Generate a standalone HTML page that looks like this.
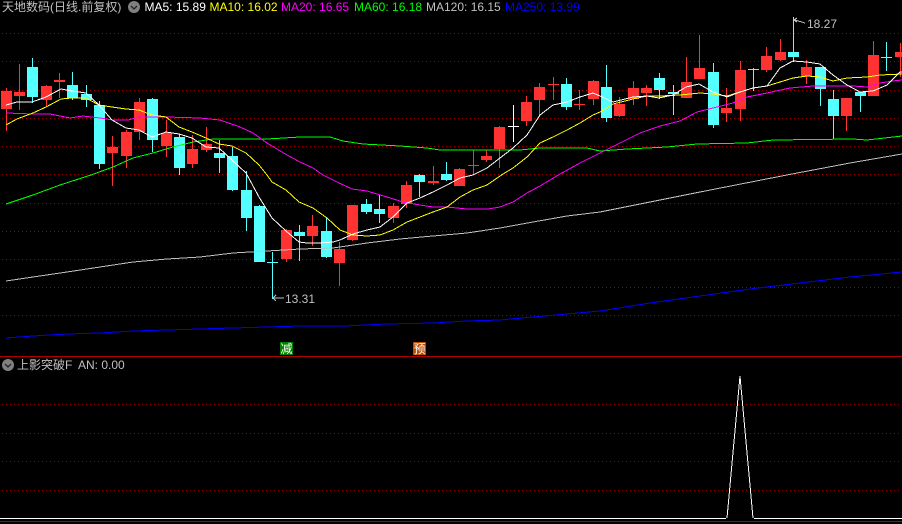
<!DOCTYPE html>
<html><head><meta charset="utf-8"><style>
html,body{margin:0;padding:0;background:#000;width:902px;height:524px;overflow:hidden}
svg{display:block;position:absolute;left:0;top:0}
text{font-family:"Liberation Sans","WenQuanYi Zen Hei","Noto Sans CJK SC",sans-serif;font-size:12px;fill:#c0c0c0}
</style></head><body>
<svg width="902" height="524" viewBox="0 0 902 524" xmlns="http://www.w3.org/2000/svg">
<g shape-rendering="crispEdges">
<g stroke="#a00000" stroke-width="1" stroke-dasharray="1 3" fill="none">
<path d="M2 33.5H902M2 61.5H902M2 90.5H902M2 118.5H902M2 146.5H902M2 174.5H902M2 203.5H902M2 231.5H902M2 259.5H902M2 287.5H902M2 315.5H902"/>
<path d="M2 404.5H902M2 433.5H902M2 461.5H902M2 490.5H902"/>
</g>
<path fill="#ff3232" d="M6 88h1v43h-1zM1 91h11v18h-11zM19 64h1v46h-1zM14 92h11v4h-11zM46 85h1v22h-1zM41 86h11v14h-11zM59 73h1v25h-1zM54 80h11v2h-11zM112 136h1v50h-1zM107 147h11v6h-11zM126 130h1v38h-1zM121 132h11v24h-11zM139 98h1v42h-1zM134 102h11v30h-11zM166 120h1v37h-1zM161 133h11v13h-11zM192 135h1v33h-1zM187 149h11v15h-11zM206 127h1v25h-1zM201 144h11v6h-11zM286 229h1v33h-1zM281 230h11v29h-11zM312 215h1v31h-1zM307 226h11v10h-11zM339 242h1v44h-1zM334 249h11v14h-11zM352 205h1v36h-1zM347 205h11v35h-11zM393 203h1v20h-1zM388 206h11v12h-11zM406 181h1v27h-1zM401 185h11v19h-11zM433 166h1v19h-1zM428 181h11v2h-11zM459 168h1v18h-1zM454 169h11v17h-11zM473 150h1v25h-1zM468 165h11v1h-11zM486 150h1v12h-1zM481 156h11v4h-11zM499 126h1v42h-1zM494 127h11v22h-11zM526 96h1v30h-1zM521 102h11v19h-11zM539 83h1v33h-1zM534 87h11v13h-11zM553 77h1v23h-1zM548 84h11v1h-11zM579 90h1v20h-1zM574 104h11v1h-11zM593 80h1v25h-1zM588 81h11v18h-11zM619 97h1v20h-1zM614 104h11v12h-11zM633 81h1v24h-1zM628 88h11v11h-11zM646 85h1v21h-1zM641 88h11v5h-11zM686 57h1v41h-1zM681 82h11v16h-11zM699 35h1v44h-1zM694 68h11v11h-11zM726 88h1v34h-1zM721 108h11v5h-11zM740 61h1v60h-1zM735 70h11v39h-11zM766 47h1v25h-1zM761 56h11v14h-11zM780 39h1v22h-1zM775 52h11v8h-11zM806 60h1v24h-1zM801 67h11v9h-11zM846 98h1v33h-1zM841 98h11v18h-11zM873 41h1v55h-1zM868 55h11v41h-11zM900 43h1v34h-1zM895 52h7v5h-7z"/>
<path fill="#54ffff" d="M32 58h1v45h-1zM27 67h11v30h-11zM72 72h1v28h-1zM67 85h11v13h-11zM86 85h1v22h-1zM81 94h11v6h-11zM99 101h1v68h-1zM94 105h11v59h-11zM152 98h1v54h-1zM147 99h11v41h-11zM179 134h1v41h-1zM174 137h11v31h-11zM219 140h1v33h-1zM214 153h11v5h-11zM232 147h1v44h-1zM227 156h11v34h-11zM246 171h1v60h-1zM241 190h11v28h-11zM259 205h1v57h-1zM254 206h11v56h-11zM272 252h1v47h-1zM267 262h11v1h-11zM299 225h1v36h-1zM294 232h11v4h-11zM326 218h1v40h-1zM321 231h11v26h-11zM366 199h1v15h-1zM361 204h11v8h-11zM379 195h1v28h-1zM374 209h11v5h-11zM419 174h1v23h-1zM414 175h11v7h-11zM446 162h1v19h-1zM441 174h11v6h-11zM566 78h1v32h-1zM561 84h11v23h-11zM606 65h1v57h-1zM601 87h11v31h-11zM659 73h1v26h-1zM654 78h11v12h-11zM673 85h1v30h-1zM668 92h11v2h-11zM713 63h1v65h-1zM708 72h11v53h-11zM753 68h1v23h-1zM748 69h11v1h-11zM793 17h1v45h-1zM788 52h11v5h-11zM820 67h1v39h-1zM815 67h11v22h-11zM833 90h1v49h-1zM828 99h11v17h-11zM860 92h1v20h-1zM855 92h11v4h-11zM886 42h1v29h-1zM881 57h11v1h-11z"/>
<path fill="#fff" d="M513 105h1v37h-1zM508 126h11v1h-11z"/>
<g fill="none" stroke-width="1">
<polyline stroke="#0000ff" points="6,338 33,336 67,334 100,333 133,331 167,330 200,329 233,328 267,327 300,326 345,326 387,324 433,323 467,321 500,320 533,317 567,314 600,311 650,303 700,296 750,289 800,283 850,277 902,272"/>
<polyline stroke="#c0c0c0" points="6,281 33,277 67,272 100,267 133,262 167,259 200,257 233,253 267,251 300,249 333,248 367,243 400,239 433,236 467,233 500,228 533,222 567,216 600,212 700,192 792,174 850,163 902,154"/>
<polyline stroke="#00ff00" points="6,204 33,195 60,185 91,175 113,167 133,158 153,153 173,147 193,142 213,139 250,139 267,139 300,137 330,137 343,141 363,144 400,146 427,148 440,150 520,150 540,148 587,148 600,151 627,149 667,147 697,144 747,143 773,140 853,139 867,140 902,136"/>
<polyline stroke="#ff00ff" points="6,113 33,114 50,114 70,118 83,116 100,118 113,120 128,120 139,117 166,117 200,118 220,120 240,127 253,133 267,143 287,155 300,162 313,168 323,175 337,182 352,189 367,191 387,197 403,202 420,205 433,207 447,207 467,209 488,209 500,207 513,202 527,193 540,186 560,174 580,163 600,153 620,143 640,133 660,126 680,121 697,112 713,108 733,103 747,97 767,93 790,88 813,86 853,86 867,87 880,83 893,81 902,80"/>
<polyline stroke="#ffff00" points="6,125 17,119 33,113 46,107 61,99 72,98 86,98 99,105 112,107 126,109 139,110 152,115 166,117 179,127 192,132 206,138 219,144 232,146 246,153 259,165 267,175 272,182 286,190 299,202 313,208 327,218 340,230 353,235 367,236 380,235 393,230 407,222 420,217 433,212 447,207 460,197 473,190 487,185 503,174 513,168 527,157 540,143 553,137 567,130 580,123 593,115 600,112 613,104 633,99 647,96 660,96 680,95 700,93 713,94 727,96 740,92 753,88 767,86 780,82 793,78 807,76 820,77 833,81 847,78 867,77 880,75 902,74"/>
<polyline stroke="#ffffff" points="6,105 17,102 32,102 46,97 61,89 72,91 86,93 99,105 112,120 126,128 139,130 152,137 166,132 179,134 192,138 206,147 219,148 232,160 246,173 259,197 272,218 286,231 299,242 307,243 319,243 333,242 340,240 353,234 367,230 380,227 393,217 407,203 420,198 433,192 447,185 460,178 473,175 487,168 500,158 513,148 527,135 540,115 553,105 567,102 580,97 593,93 600,96 613,102 633,97 647,96 659,98 673,95 686,87 699,84 713,92 727,97 740,92 753,88 767,86 780,68 793,61 807,62 820,64 833,75 847,85 860,92 873,91 887,85 900,72 902,72"/>
<polyline stroke="#c0c0c0" points="795,20 805,23"/>
<polyline stroke="#c0c0c0" points="797,18 794,20 797,22"/>
<polyline stroke="#c0c0c0" points="273,298 284,298"/>
<polyline stroke="#c0c0c0" points="276,295 273,298 276,301"/>
<path stroke="#ffffff" d="M0 518.5H726M754 518.5H902"/>
<polyline stroke="#ffffff" points="727,518 740,376 753,518"/>
<path stroke="#b00000" d="M0 356.5H902M0 521.5H902"/>
</g>
<rect x="280" y="342" width="13" height="13" fill="#008000"/>
<rect x="413" y="342" width="13" height="13" fill="#b84c00"/>
</g>
<circle cx="134" cy="7" r="6" fill="#808080"/>
<path d="M131 6l3 3 3-3" fill="none" stroke="#222" stroke-width="1.3"/>
<circle cx="8" cy="365" r="6" fill="#808080"/>
<path d="M5 364l3 3 3-3" fill="none" stroke="#222" stroke-width="1.3"/>
<text x="2" y="11">天地数码(日线.前复权)</text>
<text x="144.5" y="11" style="fill:#fff">MA5: 15.89</text>
<text x="209.5" y="11" style="fill:#ff0">MA10: 16.02</text>
<text x="281" y="11" style="fill:#f0f">MA20: 16.65</text>
<text x="354" y="11" style="fill:#0f0">MA60: 16.18</text>
<text x="426" y="11" style="fill:#c0c0c0">MA120: 16.15</text>
<text x="505" y="11" style="fill:#00f">MA250: 13.99</text>
<text x="807" y="28">18.27</text>
<text x="285" y="303">13.31</text>
<text x="280.5" y="353" style="fill:#fff">减</text>
<text x="413.5" y="353" style="fill:#fff">预</text>
<text x="17" y="369">上影突破F</text>
<text x="78" y="369">AN: 0.00</text>
</svg>
</body></html>
